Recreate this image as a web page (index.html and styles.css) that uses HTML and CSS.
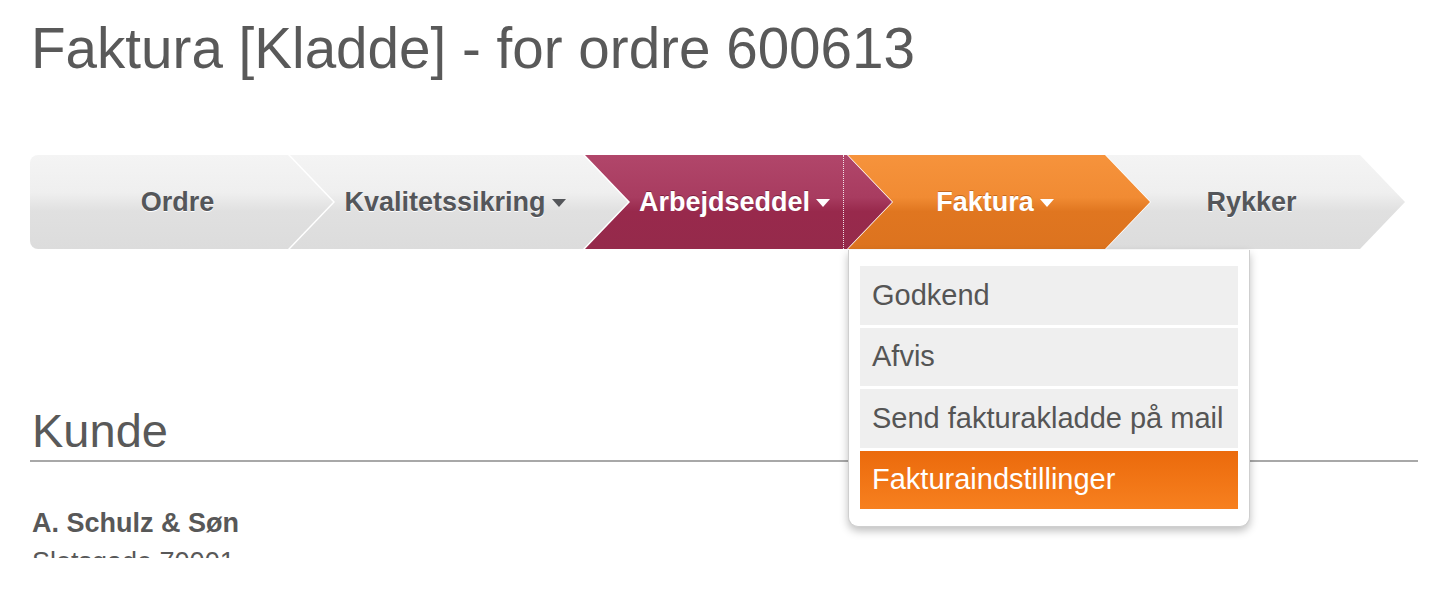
FILE: index.html
```html
<!DOCTYPE html>
<html>
    <head>
        <title>
            Faktura [Kladde] - for ordre 600613
        </title>
        <link rel="stylesheet" href="styles.css">
    </head>
    <body>
        <div class="page">
            <h1 class="title">Faktura [Kladde] - for ordre 600613</h1>

            <nav class="flow">
                <div class="steps">
                    <a class="step step-first">Ordre</a>
                    <a class="step step-kval">Kvalitetssikring<span class="caret"></span></a>
                    <a class="step step-arb done">Arbejdseddel<span class="caret"></span></a>
                    <a class="step step-fak current">Faktura<span class="caret"></span></a>
                    <a class="step step-last">Rykker</a>
                </div>
                <ul class="menu">
                    <li>Godkend</li>
                    <li>Afvis</li>
                    <li>Send fakturakladde på mail</li>
                    <li class="active">Fakturaindstillinger</li>
                </ul>
            </nav>

            <section class="customer">
                <h2>Kunde</h2>
                <p class="name">A. Schulz &amp; Søn</p>
                <p>Slotsgade 70001</p>
            </section>
        </div>
    </body>
</html>
```

FILE: styles.css
```css
body {
    margin: 0;
    padding: 0;
    background: #fff;
    font-family: "Liberation Sans", Arial, sans-serif;
    color: #585858;
}
.page {
    height: 558px;
    overflow: hidden;
    padding: 0 24px 0 30px;
}
.title {
    margin: 17px 0 0 1px;
    font-size: 56.6px;
    line-height: 64px;
    font-weight: normal;
    color: #595959;
}

/* stepper */
.flow {
    position: relative;
    margin-top: 74px;
}
.steps {
    display: flex;
    height: 94px;
}
.step {
    position: relative;
    display: flex;
    align-items: center;
    justify-content: center;
    padding-right: 8px;
    box-sizing: border-box;
    height: 94px;
    font-size: 27px;
    font-weight: bold;
    color: #54565a;
    text-shadow: 0 1px 0 #fff;
    background: linear-gradient(#f4f4f4 0%, #efefef 40%, #e0e0e0 60%, #dcdcdc 100%);
    clip-path: polygon(0 0, calc(100% - 45px) 0, 100% 50%, calc(100% - 45px) 100%, 0 100%, 45px 50%);
}
.step-first {
    width: 303px;
    border-radius: 8px 0 0 8px;
    clip-path: polygon(0 0, calc(100% - 45px) 0, 100% 50%, calc(100% - 45px) 100%, 0 100%);
}
.step-kval { width: 338px; margin-left: -43px; }
.step-arb { width: 307px; margin-left: -43px; }
.step-fak { width: 302px; margin-left: -44px; }
.step-last { width: 299px; margin-left: -44px; }

.done {
    color: #fff;
    text-shadow: 0 -1px 0 rgba(80, 10, 30, 0.5);
    background: linear-gradient(#b1466a 0%, #a83c60 45%, #98294c 60%, #952a4b 100%);
}
.done::after {
    content: "";
    position: absolute;
    top: 0;
    bottom: 0;
    right: 48px;
    border-left: 1px dotted rgba(255, 255, 255, 0.85);
}
.current {
    color: #fff;
    text-shadow: 0 -1px 0 rgba(120, 50, 0, 0.4);
    background: linear-gradient(#f6933c 0%, #f18b33 45%, #e07620 60%, #dc731f 100%);
}
.caret {
    width: 0;
    height: 0;
    margin-left: 6px;
    margin-top: 2px;
    border-left: 7px solid transparent;
    border-right: 7px solid transparent;
    border-top: 8px solid #54565a;
}
.done .caret,
.current .caret {
    border-top-color: #fff;
}

/* dropdown */
.menu {
    position: absolute;
    top: 95px;
    left: 818px;
    width: 402px;
    box-sizing: border-box;
    margin: 0;
    padding: 16px 11px 17px 11px;
    list-style: none;
    background: #fff;
    border: 1px solid #cfcfcf;
    border-top: 0;
    border-radius: 0 0 10px 10px;
    box-shadow: 0 4px 8px rgba(0, 0, 0, 0.25);
    display: flex;
    flex-direction: column;
    gap: 3px;
}
.menu li {
    height: 58.5px;
    display: flex;
    align-items: center;
    padding-left: 12px;
    font-size: 29px;
    color: #555;
    background: #efefef;
}
.menu li.active {
    color: #fff;
    background: linear-gradient(#eb6a0c, #f7801f);
}

/* customer */
.customer {
    margin-top: 155px;
}
.customer h2 {
    margin: 0;
    padding: 0 0 2px 2px;
    font-size: 47px;
    line-height: 54px;
    font-weight: normal;
    color: #595959;
    border-bottom: 2px solid #a8a8a8;
}
.customer p {
    margin: 0 0 0 2px;
    font-size: 27px;
    line-height: 39px;
    color: #585858;
}
.customer .name {
    margin-top: 42px;
    font-weight: bold;
}
```
